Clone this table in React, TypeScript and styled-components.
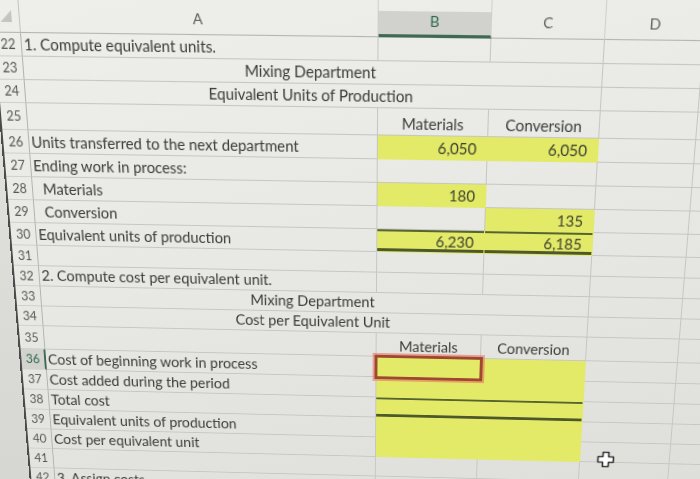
import React from 'react';
import styled, { createGlobalStyle, css } from 'styled-components';

const GRID = '#c6c6c2';
const YEL = '#e2ea68';
const COLS = '26px 344px 107px 107px 93px 150px';

/* Projective mapping of the flat sheet onto the photographed screen plane. */
const PHOTO_PLANE =
  'matrix3d(1.027591, 0.011289, 0, -0.0000314, 0.08847, 1.089648, 0, 0.00025194, 0, 0, 1, 0, -13.3463, -35.9638, 0, 0.985007)';

const GlobalStyle = createGlobalStyle`
  html, body { margin: 0; padding: 0; background: #d8d8d4; overflow: hidden; }
  #root { width: 700px; height: 479px; }
`;

const Viewport = styled.div`
  width: 700px;
  height: 479px;
  overflow: hidden;
  background: linear-gradient(180deg, #e4e4e0 0%, #d6d6d2 100%);
  font-family: Lato, 'Noto Sans', sans-serif;
  color: #3b3b3b;
`;

const Sheet = styled.div`
  width: 829px;
  border-left: 2px solid #4b4b4b;
  transform-origin: 0 0;
  transform: ${PHOTO_PLANE};
  background: linear-gradient(168deg, #efefec 0%, #e8e8e4 45%, #dcdcd8 100%);
`;

const Row = styled.div<{ $h?: number }>`
  display: grid;
  grid-template-columns: ${COLS};
  height: ${(p) => p.$h ?? 22}px;
`;

const HeaderRow = styled(Row)`
  height: 63px;
`;

const Corner = styled.div`
  display: flex;
  align-items: flex-end;
  justify-content: center;
  padding-bottom: 9px;
  border-bottom: 1px solid #b4b4b0;
  border-right: 1px solid #c4c4c0;
`;

const ColHead = styled.div<{ $active?: boolean }>`
  display: flex;
  align-items: flex-end;
  justify-content: center;
  padding-bottom: 6px;
  font-size: 14px;
  line-height: 17px;
  color: ${(p) => (p.$active ? '#2f6a4a' : '#5e5e5e')};
  border-right: 1px solid #d0d0cc;
  border-bottom: 1px solid #b4b4b0;
  box-sizing: border-box;
  ${(p) =>
    p.$active &&
    css`
      background: linear-gradient(180deg, transparent 0, transparent 39px, #d1d1ce 39px);
      border-bottom: 3px solid #3f6a52;
      padding-bottom: 4px;
    `}
`;

const RowNum = styled.div<{ $active?: boolean }>`
  display: flex;
  align-items: center;
  justify-content: center;
  font-size: 12.5px;
  color: #575757;
  border-right: 1px solid #b2b2ae;
  border-bottom: 1px solid #cfcfcb;
  box-sizing: border-box;
  ${(p) =>
    p.$active &&
    css`
      background: #d2d2ce;
      color: #2f6a4a;
      border-right: 2px solid #3f6a52;
    `}
`;

type CellProps = {
  $fill?: boolean;
  $align?: 'left' | 'right' | 'center';
  $indent?: number;
  $span?: number;
  $top?: boolean;
  $bottom?: boolean;
  $selected?: boolean;
  $num?: boolean;
};

const Cell = styled.div<CellProps>`
  display: flex;
  align-items: flex-end;
  justify-content: ${(p) =>
    p.$align === 'right' ? 'flex-end' : p.$align === 'center' ? 'center' : 'flex-start'};
  grid-column: span ${(p) => p.$span ?? 1};
  box-sizing: border-box;
  padding: 0 ${(p) => (p.$align === 'right' ? 10 : 2)}px 1px ${(p) => 2 + (p.$indent ?? 0)}px;
  font-size: 14.8px;
  line-height: 19px;
  white-space: nowrap;
  color: ${(p) => (p.$num ? '#3e3f30' : '#3b3b3b')};
  border-right: 1px solid ${(p) => (p.$fill ? YEL : GRID)};
  border-bottom: 1px solid ${(p) => (p.$fill ? YEL : GRID)};
  background: ${(p) => (p.$fill ? YEL : 'transparent')};
  ${(p) =>
    (p.$top || p.$bottom) &&
    css`
      box-shadow: ${[
        p.$top ? 'inset 0 2px 0 #586430' : '',
        p.$bottom ? 'inset 0 -3px 0 #4d592b' : '',
      ]
        .filter(Boolean)
        .join(', ')};
    `}
  ${(p) =>
    p.$selected &&
    css`
      position: relative;
      z-index: 2;
      outline: 3px solid #9e4832;
      outline-offset: -1px;
      box-shadow: 0 0 0 4px rgba(232, 116, 96, 0.6);
    `}
`;

const CursorCell = styled(Cell)`
  align-items: center;
  padding-left: 17px;
`;

const CursorMark = styled.span`
  display: flex;
  transform: translateY(8px);
`;

const Triangle = () => (
  <svg width="11" height="11" viewBox="0 0 11 11">
    <polygon points="11,0 11,11 0,11" fill="#c4c4c0" />
  </svg>
);

const PlusCursor = () => (
  <svg width="19" height="19" viewBox="0 0 19 19">
    <path
      d="M6.5 1.5h6v5h5v6h-5v5h-6v-5h-5v-6h5z"
      fill="#ffffff"
      stroke="#2e2e2e"
      strokeWidth="1.6"
      strokeLinejoin="round"
    />
  </svg>
);

const Empty = () => (
  <>
    <Cell />
    <Cell />
  </>
);

export default function App() {
  return (
    <>
      <GlobalStyle />
      <Viewport>
        <Sheet>
          <HeaderRow>
            <Corner>
              <Triangle />
            </Corner>
            <ColHead>A</ColHead>
            <ColHead $active>B</ColHead>
            <ColHead>C</ColHead>
            <ColHead>D</ColHead>
            <ColHead />
          </HeaderRow>

          <Row>
            <RowNum>22</RowNum>
            <Cell>1. Compute equivalent units.</Cell>
            <Cell />
            <Cell />
            <Empty />
          </Row>
          <Row>
            <RowNum>23</RowNum>
            <Cell $span={3} $align="center">Mixing Department</Cell>
            <Empty />
          </Row>
          <Row>
            <RowNum>24</RowNum>
            <Cell $span={3} $align="center">Equivalent Units of Production</Cell>
            <Empty />
          </Row>
          <Row $h={26}>
            <RowNum>25</RowNum>
            <Cell />
            <Cell $align="center">Materials</Cell>
            <Cell $align="center">Conversion</Cell>
            <Empty />
          </Row>
          <Row $h={23}>
            <RowNum>26</RowNum>
            <Cell>Units transferred to the next department</Cell>
            <Cell $fill $num $align="right">6,050</Cell>
            <Cell $fill $num $align="right">6,050</Cell>
            <Empty />
          </Row>
          <Row $h={23}>
            <RowNum>27</RowNum>
            <Cell>Ending work in process:</Cell>
            <Cell />
            <Cell />
            <Empty />
          </Row>
          <Row $h={23}>
            <RowNum>28</RowNum>
            <Cell $indent={8}>Materials</Cell>
            <Cell $fill $num $align="right">180</Cell>
            <Cell />
            <Empty />
          </Row>
          <Row $h={23}>
            <RowNum>29</RowNum>
            <Cell $indent={8}>Conversion</Cell>
            <Cell />
            <Cell $fill $num $align="right">135</Cell>
            <Empty />
          </Row>
          <Row $h={23}>
            <RowNum>30</RowNum>
            <Cell>Equivalent units of production</Cell>
            <Cell $fill $num $top $bottom $align="right">6,230</Cell>
            <Cell $fill $num $top $bottom $align="right">6,185</Cell>
            <Empty />
          </Row>
          <Row $h={21}>
            <RowNum>31</RowNum>
            <Cell />
            <Cell />
            <Cell />
            <Empty />
          </Row>
          <Row $h={21}>
            <RowNum>32</RowNum>
            <Cell>2. Compute cost per equivalent unit.</Cell>
            <Cell />
            <Cell />
            <Empty />
          </Row>
          <Row $h={21}>
            <RowNum>33</RowNum>
            <Cell $span={3} $align="center">Mixing Department</Cell>
            <Empty />
          </Row>
          <Row $h={21}>
            <RowNum>34</RowNum>
            <Cell $span={3} $align="center">Cost per Equivalent Unit</Cell>
            <Empty />
          </Row>
          <Row $h={25}>
            <RowNum>35</RowNum>
            <Cell />
            <Cell $align="center">Materials</Cell>
            <Cell $align="center">Conversion</Cell>
            <Empty />
          </Row>
          <Row>
            <RowNum $active>36</RowNum>
            <Cell>Cost of beginning work in process</Cell>
            <Cell $fill $selected />
            <Cell $fill />
            <Empty />
          </Row>
          <Row>
            <RowNum>37</RowNum>
            <Cell>Cost added during the period</Cell>
            <Cell $fill $span={2} />
            <Empty />
          </Row>
          <Row>
            <RowNum>38</RowNum>
            <Cell>Total cost</Cell>
            <Cell $fill $top $bottom $span={2} />
            <Empty />
          </Row>
          <Row>
            <RowNum>39</RowNum>
            <Cell>Equivalent units of production</Cell>
            <Cell $fill $span={2} />
            <Empty />
          </Row>
          <Row>
            <RowNum>40</RowNum>
            <Cell>Cost per equivalent unit</Cell>
            <Cell $fill $span={2} />
            <CursorCell>
              <CursorMark>
                <PlusCursor />
              </CursorMark>
            </CursorCell>
            <Cell />
          </Row>
          <Row>
            <RowNum>41</RowNum>
            <Cell />
            <Cell />
            <Cell />
            <Empty />
          </Row>
          <Row>
            <RowNum>42</RowNum>
            <Cell>3. Assign costs</Cell>
            <Cell />
            <Cell />
            <Empty />
          </Row>
          <Row>
            <RowNum>43</RowNum>
            <Cell />
            <Cell />
            <Cell />
            <Empty />
          </Row>
        </Sheet>
      </Viewport>
    </>
  );
}
